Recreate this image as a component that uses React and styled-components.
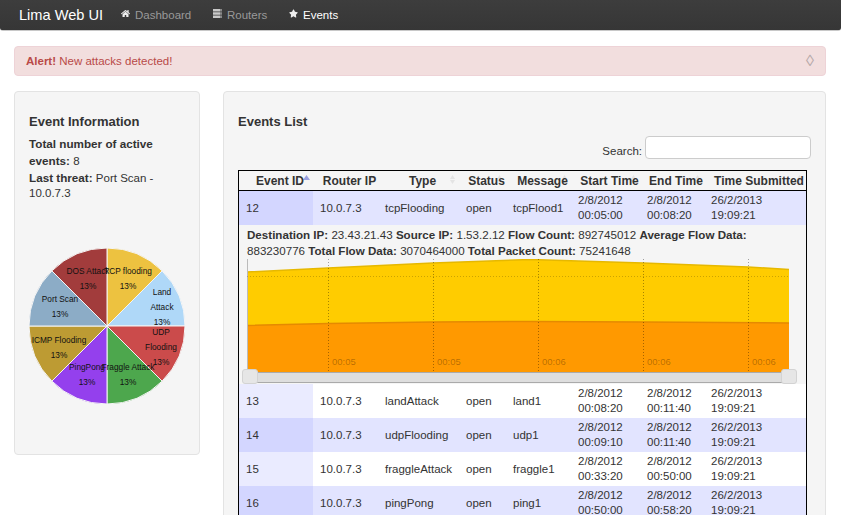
import React from "react";
import styled, { createGlobalStyle } from "styled-components";
import { FaHome, FaStar } from "react-icons/fa";

const GlobalStyle = createGlobalStyle`
  html, body {
    margin: 0;
    height: 515px;
    overflow: hidden;
    background: #fff;
  }
  body {
    font-family: "Liberation Sans", Arial, sans-serif;
    font-size: 11.5px;
    color: #333;
  }
`;

const Navbar = styled.div`
  display: flex;
  align-items: center;
  height: 30px;
  padding-left: 19px;
  background: linear-gradient(#3d3d3d, #363636);
  border-bottom: 1px solid #c8c8c8;
  border-radius: 0 0 3px 3px;
`;

const Brand = styled.div`
  width: 102px;
  font-size: 14.6px;
  color: #fff;
`;

const NavItem = styled.div`
  display: flex;
  align-items: center;
  gap: 5px;
  width: ${(p) => p.$width}px;
  color: ${(p) => (p.$active ? "#fff" : "#999")};
  svg {
    width: 9px;
    height: 9px;
    margin-top: -3px;
    color: #eee;
  }
`;

const Alert = styled.div`
  display: flex;
  justify-content: space-between;
  align-items: center;
  height: 28px;
  margin: 15px 15px 15px 14px;
  padding: 0 11px 0 11px;
  background: #f2dede;
  border: 1px solid #eed3d7;
  border-radius: 4px;
  color: #b94a48;
`;

const Close = styled.span`
  color: #b5a8a8;
  font-size: 16px;
  line-height: 18px;
`;

const Content = styled.div`
  display: grid;
  grid-template-columns: 186px 603px;
  gap: 23px;
  align-items: start;
  padding-left: 14px;
`;

const Well = styled.div`
  box-sizing: border-box;
  background: #f5f5f5;
  border: 1px solid #e3e3e3;
  border-radius: 4px;
`;

const Sidebar = styled(Well)`
  height: 364px;
  padding: 22px 14px 0;
`;

const Heading = styled.h3`
  margin: 0;
  font-size: 13px;
  line-height: 16px;
  font-weight: bold;
  color: #333;
`;

const Info = styled.p`
  margin: 6px 0 0;
  line-height: 15.8px;
  b {
    font-weight: bold;
    font-size: 11.7px;
  }
`;

const PieWrap = styled.svg`
  display: block;
  width: 158px;
  height: 160px;
  margin-top: 44px;
`;

const Panel = styled(Well)`
  height: 460px;
  padding: 22px 14px 0;
`;

const SearchRow = styled.div`
  display: flex;
  justify-content: flex-end;
  align-items: center;
  gap: 3px;
  margin: 6px 0 11px;
`;

const SearchLabel = styled.label`
  margin-top: 6px;
`;

const SearchInput = styled.input`
  box-sizing: border-box;
  width: 166px;
  height: 23px;
  background: #fff;
  border: 1px solid #ccc;
  border-radius: 4px;
  padding: 0;
`;

const Table = styled.table`
  table-layout: fixed;
  width: 569px;
  border-collapse: separate;
  border-spacing: 0;
  border: 1px solid #000;
  background: #fff;
  font-size: 11.5px;
`;

const Th = styled.th`
  position: relative;
  height: 19px;
  padding: 0 0 0 8px;
  font-size: 12px;
  font-weight: bold;
  text-align: center;
  color: #333;
  border-bottom: 1px solid #000;
  background: #f5f5f5;
  white-space: nowrap;
`;

const ThLabel = styled.span`
  position: relative;
`;

const SortMark = styled.svg`
  position: absolute;
  top: 3px;
  right: 3px;
  width: 7px;
  height: 11px;
`;

const Td = styled.td`
  height: 34px;
  padding: 0 0 0 7px;
  box-sizing: border-box;
  line-height: 15px;
  background: ${(p) => {
    if (p.$sorted) return p.$odd ? "#d3d6ff" : "#eaebff";
    return p.$odd ? "#e2e4ff" : "#fff";
  }};
`;

const DetailCell = styled.td`
  padding: 2px 0 0;
  background: #f5f5f5;
`;

const DetailText = styled.div`
  padding: 0 8px;
  font-size: 11.6px;
  line-height: 16px;
`;

const ChartWrap = styled.div`
  position: relative;
  height: 125px;
  width: 566px;
`;

const ChartSvg = styled.svg`
  display: block;
  margin-left: 8px;
`;

const Slider = styled.div`
  position: absolute;
  left: 8px;
  top: 113px;
  width: 542px;
  height: 11px;
  background: #dedede;
  border-top: 1px solid #aaa;
  border-bottom: 1px solid #aaa;
  box-sizing: border-box;
`;

const Handle = styled.div`
  position: absolute;
  top: 110px;
  left: ${(p) => p.$left}px;
  width: 16px;
  height: 15px;
  box-sizing: border-box;
  background: #e6e6e6;
  border: 1px solid #d3d3d3;
  border-radius: 3px;
`;

const columns = [74, 65, 81, 47, 65, 69, 64, 102];
const headers = ["Event ID", "Router IP", "Type", "Status", "Message", "Start Time", "End Time", "Time Submitted"];

const rows = [
  ["12", "tcpFlooding", "tcpFlood1", "00:05:00", "00:08:20"],
  ["13", "landAttack", "land1", "00:08:20", "00:11:40"],
  ["14", "udpFlooding", "udp1", "00:09:10", "00:11:40"],
  ["15", "fraggleAttack", "fraggle1", "00:33:20", "00:50:00"],
  ["16", "pingPong", "ping1", "00:50:00", "00:58:20"],
];

// label x is the centre of the text, y the first baseline, both inside the svg
const slices = [
  { color: "#edc240", label: ["TCP flooding"], x: 99, y: 28 },
  { color: "#afd8f8", label: ["Land", "Attack"], x: 133, y: 49 },
  { color: "#cb4b4b", label: ["UDP", "Flooding"], x: 132, y: 89 },
  { color: "#4da74d", label: ["Fraggle Attack"], x: 99, y: 124 },
  { color: "#9440ed", label: ["PingPong"], x: 58, y: 124 },
  { color: "#bd9b33", label: ["ICMP Flooding"], x: 30, y: 97 },
  { color: "#8cacc6", label: ["Port Scan"], x: 31, y: 56 },
  { color: "#a23c3c", label: ["DOS Attack"], x: 59, y: 28 },
];

const CX = 78;
const CY = 80;
const R = 78;

function slicePath(i) {
  const a0 = (i * Math.PI) / 4 - Math.PI / 2;
  const a1 = ((i + 1) * Math.PI) / 4 - Math.PI / 2;
  const x0 = CX + R * Math.cos(a0);
  const y0 = CY + R * Math.sin(a0);
  const x1 = CX + R * Math.cos(a1);
  const y1 = CY + R * Math.sin(a1);
  return `M${CX} ${CY}L${x0} ${y0}A${R} ${R} 0 0 1 ${x1} ${y1}Z`;
}

const Pie = () => (
  <PieWrap viewBox="0 0 158 160">
    {slices.map((s, i) => (
      <path key={s.color} d={slicePath(i)} fill={s.color} stroke="#f5f5f5" strokeWidth="1" />
    ))}
    {slices.map((s) => (
      <text
        key={s.color}
        textAnchor="middle"
        fontFamily="Liberation Sans, Arial, sans-serif"
        fontSize="8.3"
        fill="#111"
      >
        {[...s.label, "13%"].map((line, j) => (
          <tspan key={line} x={s.x} y={s.y + j * 15}>
            {line}
          </tspan>
        ))}
      </text>
    ))}
  </PieWrap>
);

// three stacked bars, each with a dim end, the glyph used for routers in the nav
const RouterIcon = () => (
  <svg viewBox="0 0 9 9">
    <path d="M0 0H7V2.5H0ZM0 3.25H7V5.75H0ZM0 6.5H7V9H0Z" fill="#c8c8c8" />
    <path d="M7 0H9V2.5H7ZM7 3.25H9V5.75H7ZM7 6.5H9V9H7Z" fill="#8a8a8a" />
  </svg>
);

const gridX = [81, 186, 291, 396, 501];
const gridLabels = ["00:05", "00:05", "00:06", "00:06", "00:06"];

const Chart = () => (
  <ChartSvg width="542" height="113" viewBox="0 0 542 113">
    <path d="M0 13L81 9L186 4L283 0.5L396 4L501 8L542 10.5V113H0Z" fill="#ffcc00" />
    <path d="M0 13L81 9L186 4L283 0.5L396 4L501 8L542 10.5" fill="none" stroke="#e6b800" strokeWidth="1.5" />
    <path d="M0 66.5L81 64.5L186 63L283 62.5L396 63L542 64V113H0Z" fill="#ff9900" />
    <path d="M0 66.5L81 64.5L186 63L283 62.5L396 63L542 64" fill="none" stroke="#e58a00" strokeWidth="1.5" />
    <line x1="0.5" y1="0" x2="0.5" y2="113" stroke="#bbb" />
    <line x1="0" y1="17.5" x2="542" y2="17.5" stroke="rgba(0,0,0,0.2)" strokeDasharray="1 2" />
    {gridX.map((x, i) => (
      <g key={x}>
        <line x1={x + 0.5} y1="0" x2={x + 0.5} y2="113" stroke="rgba(0,0,0,0.35)" strokeDasharray="1 2" />
        <text x={x + 4} y="106" fontFamily="Liberation Sans, Arial, sans-serif" fontSize="9.5" fill="rgba(0,0,0,0.3)">
          {gridLabels[i]}
        </text>
      </g>
    ))}
  </ChartSvg>
);

const EventRow = ({ row, odd }) => (
  <tr>
    <Td $sorted $odd={odd}>{row[0]}</Td>
    <Td $odd={odd}>10.0.7.3</Td>
    <Td $odd={odd}>{row[1]}</Td>
    <Td $odd={odd}>open</Td>
    <Td $odd={odd}>{row[2]}</Td>
    <Td $odd={odd}>2/8/2012<br />{row[3]}</Td>
    <Td $odd={odd}>2/8/2012<br />{row[4]}</Td>
    <Td $odd={odd}>26/2/2013<br />19:09:21</Td>
  </tr>
);

export default function App() {
  return (
    <>
      <GlobalStyle />
      <Navbar>
        <Brand>Lima Web UI</Brand>
        <NavItem $width={92}><FaHome />Dashboard</NavItem>
        <NavItem $width={76}><RouterIcon />Routers</NavItem>
        <NavItem $active><FaStar />Events</NavItem>
      </Navbar>
      <Alert>
        <span><b>Alert!</b> New attacks detected!</span>
        <Close>◊</Close>
      </Alert>
      <Content>
        <Sidebar>
          <Heading>Event Information</Heading>
          <Info>
            <b>Total number of active events:</b> 8<br />
            <b>Last threat:</b> Port Scan - 10.0.7.3
          </Info>
          <Pie />
        </Sidebar>
        <Panel>
          <Heading>Events List</Heading>
          <SearchRow>
            <SearchLabel>Search:</SearchLabel>
            <SearchInput />
          </SearchRow>
          <Table>
            <colgroup>
              {columns.map((w, i) => <col key={i} width={w} />)}
            </colgroup>
            <thead>
              <tr>
                {headers.map((h, i) => (
                  <Th key={h}>
                    <SortMark viewBox="0 0 7 11">
                      {i === 0 ? (
                        <path d="M3.5 1L7 6H0Z" fill="#9aa0e0" />
                      ) : (
                        <path d="M3.5 1L6 5H1ZM3.5 10L1 6H6Z" fill="#e4e4e4" />
                      )}
                    </SortMark>
                    <ThLabel>{h}</ThLabel>
                  </Th>
                ))}
              </tr>
            </thead>
            <tbody>
              <EventRow row={rows[0]} odd />
              <tr>
                <DetailCell colSpan={8}>
                  <DetailText>
                    <b>Destination IP:</b> 23.43.21.43 <b>Source IP:</b> 1.53.2.12 <b>Flow Count:</b> 892745012 <b>Average Flow Data:</b> 883230776 <b>Total Flow Data:</b> 3070464000 <b>Total Packet Count:</b> 75241648
                  </DetailText>
                  <ChartWrap>
                    <Chart />
                    <Slider />
                    <Handle $left={3} />
                    <Handle $left={542} />
                  </ChartWrap>
                </DetailCell>
              </tr>
              {rows.slice(1).map((row, i) => (
                <EventRow key={row[0]} row={row} odd={i % 2 === 1} />
              ))}
            </tbody>
          </Table>
        </Panel>
      </Content>
    </>
  );
}
